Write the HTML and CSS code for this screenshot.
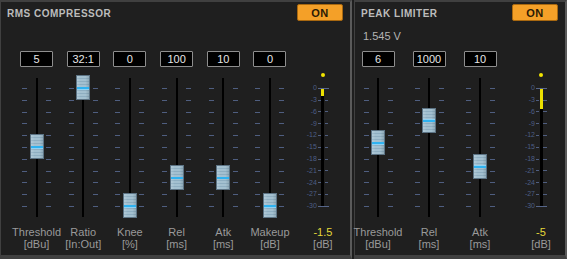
FILE: index.html
```html
<!DOCTYPE html>
<html lang="en">
<head>
  <meta charset="UTF-8" />
  <title>Dynamics</title>
  <link rel="stylesheet" href="styles.css">
</head>
<body>
  <div class="rack">

    <!-- RMS compressor -->
    <section class="panel panel-comp">
      <header class="panel-head">
        <span class="title">RMS COMPRESSOR</span>
        <button class="on-btn">ON</button>
      </header>
      <div class="info"></div>
      <div class="strip">
        <div class="channel">
          <div class="value">5</div>
          <div class="fader"><span class="track"></span><span class="cap" style="top:67px"></span></div>
          <div class="label">Threshold<br>[dBu]</div>
        </div>
        <div class="channel">
          <div class="value">32:1</div>
          <div class="fader"><span class="track"></span><span class="cap" style="top:8px"></span></div>
          <div class="label">Ratio<br>[In:Out]</div>
        </div>
        <div class="channel">
          <div class="value">0</div>
          <div class="fader"><span class="track"></span><span class="cap" style="top:125.5px"></span></div>
          <div class="label">Knee<br>[%]</div>
        </div>
        <div class="channel">
          <div class="value">100</div>
          <div class="fader"><span class="track"></span><span class="cap" style="top:97.5px"></span></div>
          <div class="label">Rel<br>[ms]</div>
        </div>
        <div class="channel">
          <div class="value">10</div>
          <div class="fader"><span class="track"></span><span class="cap" style="top:97.5px"></span></div>
          <div class="label">Atk<br>[ms]</div>
        </div>
        <div class="channel">
          <div class="value">0</div>
          <div class="fader"><span class="track"></span><span class="cap" style="top:125.5px"></span></div>
          <div class="label">Makeup<br>[dB]</div>
        </div>

        <div class="meter">
          <div class="meter-top"></div>
          <div class="meter-body">
            <span class="dot"></span>
            <div class="meter-track"><span class="level" style="height:7px"></span></div>
            <div class="scale-row"><span class="num">0</span><i class="dash long"></i></div>
            <div class="scale-row"><span class="num">-3</span><i class="dash"></i><i class="dash r"></i></div>
            <div class="scale-row"><span class="num">-6</span><i class="dash"></i><i class="dash r"></i></div>
            <div class="scale-row"><span class="num">-9</span><i class="dash"></i><i class="dash r"></i></div>
            <div class="scale-row"><span class="num">-12</span><i class="dash"></i><i class="dash r"></i></div>
            <div class="scale-row"><span class="num">-15</span><i class="dash"></i><i class="dash r"></i></div>
            <div class="scale-row"><span class="num">-18</span><i class="dash"></i><i class="dash r"></i></div>
            <div class="scale-row"><span class="num">-21</span><i class="dash"></i><i class="dash r"></i></div>
            <div class="scale-row"><span class="num">-24</span><i class="dash"></i><i class="dash r"></i></div>
            <div class="scale-row"><span class="num">-27</span><i class="dash"></i><i class="dash r"></i></div>
            <div class="scale-row"><span class="num">-30</span><i class="dash long"></i></div>
          </div>
          <div class="label"><span class="readout">-1.5</span><br>[dB]</div>
        </div>
      </div>
    </section>

    <!-- Peak limiter -->
    <section class="panel panel-limit">
      <header class="panel-head">
        <span class="title">PEAK LIMITER</span>
        <button class="on-btn">ON</button>
      </header>
      <div class="info">1.545 V</div>
      <div class="strip">
        <div class="channel">
          <div class="value">6</div>
          <div class="fader"><span class="track"></span><span class="cap" style="top:63px"></span></div>
          <div class="label">Threshold<br>[dBu]</div>
        </div>
        <div class="channel">
          <div class="value">1000</div>
          <div class="fader"><span class="track"></span><span class="cap" style="top:40.5px"></span></div>
          <div class="label">Rel<br>[ms]</div>
        </div>
        <div class="channel">
          <div class="value">10</div>
          <div class="fader"><span class="track"></span><span class="cap" style="top:87px"></span></div>
          <div class="label">Atk<br>[ms]</div>
        </div>

        <div class="meter">
          <div class="meter-top"></div>
          <div class="meter-body">
            <span class="dot"></span>
            <div class="meter-track"><span class="level" style="height:20px"></span></div>
            <div class="scale-row"><span class="num">0</span><i class="dash long"></i></div>
            <div class="scale-row"><span class="num">-3</span><i class="dash"></i><i class="dash r"></i></div>
            <div class="scale-row"><span class="num">-6</span><i class="dash"></i><i class="dash r"></i></div>
            <div class="scale-row"><span class="num">-9</span><i class="dash"></i><i class="dash r"></i></div>
            <div class="scale-row"><span class="num">-12</span><i class="dash"></i><i class="dash r"></i></div>
            <div class="scale-row"><span class="num">-15</span><i class="dash"></i><i class="dash r"></i></div>
            <div class="scale-row"><span class="num">-18</span><i class="dash"></i><i class="dash r"></i></div>
            <div class="scale-row"><span class="num">-21</span><i class="dash"></i><i class="dash r"></i></div>
            <div class="scale-row"><span class="num">-24</span><i class="dash"></i><i class="dash r"></i></div>
            <div class="scale-row"><span class="num">-27</span><i class="dash"></i><i class="dash r"></i></div>
            <div class="scale-row"><span class="num">-30</span><i class="dash long"></i></div>
          </div>
          <div class="label"><span class="readout">-5</span><br>[dB]</div>
        </div>
      </div>
    </section>

  </div>
</body>
</html>
```

FILE: styles.css
```css
/* Basic reset */
html, body {
  margin: 0;
  padding: 0;
  background: #1e1e1e;
  font-family: "Liberation Sans", Arial, sans-serif;
}
/* Two panels side by side */
.rack {
  display: flex;
  gap: 2px;
  height: 259px;
}
.panel {
  box-sizing: border-box;
  height: 259px;
  background: #1f1f1f;
  border-top: 2px solid #404040;
  border-left: 1px solid #404040;
  border-right: 2px solid #5a5a5a;
  border-bottom: 4px solid #404040;
  display: flex;
  flex-direction: column;
}
.panel-comp {
  width: 352px;
}
.panel-limit {
  width: 213px;
}
/* Header: title + ON button */
.panel-head {
  display: flex;
  justify-content: space-between;
  align-items: flex-start;
  height: 21px;
  padding: 0 7px 0 6px;
}
.title {
  margin-top: 5.5px;
  font-size: 10px;
  line-height: 12px;
  font-weight: bold;
  letter-spacing: 0.5px;
  color: #bcbcbc;
}
.on-btn {
  margin-top: 2px;
  width: 46px;
  height: 17px;
  padding: 0;
  box-sizing: border-box;
  background: #f4a028;
  border: 1px solid #a86810;
  border-radius: 2px;
  font-family: "Liberation Sans", Arial, sans-serif;
  font-size: 11px;
  font-weight: bold;
  color: #2a1a05;
  letter-spacing: 0.5px;
}
/* Line below the header (voltage readout) */
.info {
  box-sizing: border-box;
  height: 28px;
  padding: 6.5px 0 0 8px;
  font-family: "Liberation Sans Narrow", "Liberation Sans", sans-serif;
  font-size: 11px;
  line-height: 12px;
  color: #b4b4b4;
}
/* Row of faders and the meter */
.strip {
  display: flex;
}
.panel-comp .strip {
  padding-left: 12.2px;
}
.panel-comp .channel {
  width: 46.7px;
}
.panel-comp .meter {
  margin-left: 9.6px;
}
.panel-limit .strip {
  gap: 5px;
}
.panel-limit .channel {
  width: 46px;
}
.panel-limit .meter {
  margin-left: 13px;
}
.channel, .meter {
  display: flex;
  flex-direction: column;
  align-items: center;
}
.value {
  box-sizing: border-box;
  width: 33px;
  height: 16px;
  background: #000;
  border: 1px solid #8e8e8e;
  border-radius: 1px;
  font-family: "Liberation Sans Narrow", "Liberation Sans", sans-serif;
  font-size: 11px;
  line-height: 14px;
  text-align: center;
  color: #e6e6e6;
}
/* Fader slot */
.fader {
  position: relative;
  width: 100%;
  height: 159px;
}
/* tick dashes left and right of the slot */
.fader::before, .fader::after {
  content: '';
  position: absolute;
  top: 21px;
  width: 5px;
  height: 120px;
  background: repeating-linear-gradient(to bottom, #4f5e80 0 1px, transparent 1px 11.8px);
}
.fader::before {
  left: calc(50% - 14.5px);
}
.fader::after {
  left: calc(50% + 9.5px);
}
.track {
  position: absolute;
  top: 11px;
  left: calc(50% - 1px);
  width: 2px;
  height: 139px;
  background: #000;
}
.cap {
  position: absolute;
  left: calc(50% - 7px);
  width: 14px;
  height: 25px;
  box-sizing: border-box;
  border: 1px solid #5c7384;
  background:
    linear-gradient(to bottom, transparent 10.5px, #8fd2f4 10.5px, #2fb2f0 11.5px, #2fb2f0 13px, #8fd2f4 13.5px, transparent 13.5px),
    linear-gradient(to right, rgba(255,255,255,0.15), transparent 30%, transparent 70%, rgba(0,0,0,0.12)),
    repeating-linear-gradient(to bottom, #a3c0d0 0 2px, #8eaec1 2px 3px);
}
.label {
  font-family: "Liberation Sans Narrow", "Liberation Sans", sans-serif;
  font-size: 11px;
  line-height: 12px;
  color: #9a9a9a;
  text-align: center;
  white-space: nowrap;
}
.readout {
  color: #e4d83a;
}
/* Level meter */
.meter {
  width: 40px;
}
.meter-top {
  height: 16px;
}
.meter-body {
  position: relative;
  box-sizing: border-box;
  width: 40px;
  height: 159px;
  padding-top: 15.4px;
}
.dot {
  position: absolute;
  top: 6px;
  left: 18px;
  width: 4px;
  height: 4px;
  border-radius: 50%;
  background: #f2e400;
}
.meter-track {
  position: absolute;
  z-index: 1;
  top: 22px;
  left: 18.5px;
  width: 3px;
  height: 117px;
  background: #000;
}
.level {
  display: block;
  background: #ece000;
}
.scale-row {
  display: flex;
  align-items: center;
  height: 11.8px;
}
.num {
  width: 14px;
  text-align: right;
  font-size: 7px;
  line-height: 8px;
  color: #4c5e86;
}
.dash {
  display: block;
  margin-left: 1px;
  width: 3px;
  height: 1px;
  background: #4f5e80;
}
.dash.r {
  margin-left: 4px;
  width: 3.5px;
}
.dash.long {
  position: relative;
  z-index: 2;
  width: 11px;
  background: #56668a;
}
```
